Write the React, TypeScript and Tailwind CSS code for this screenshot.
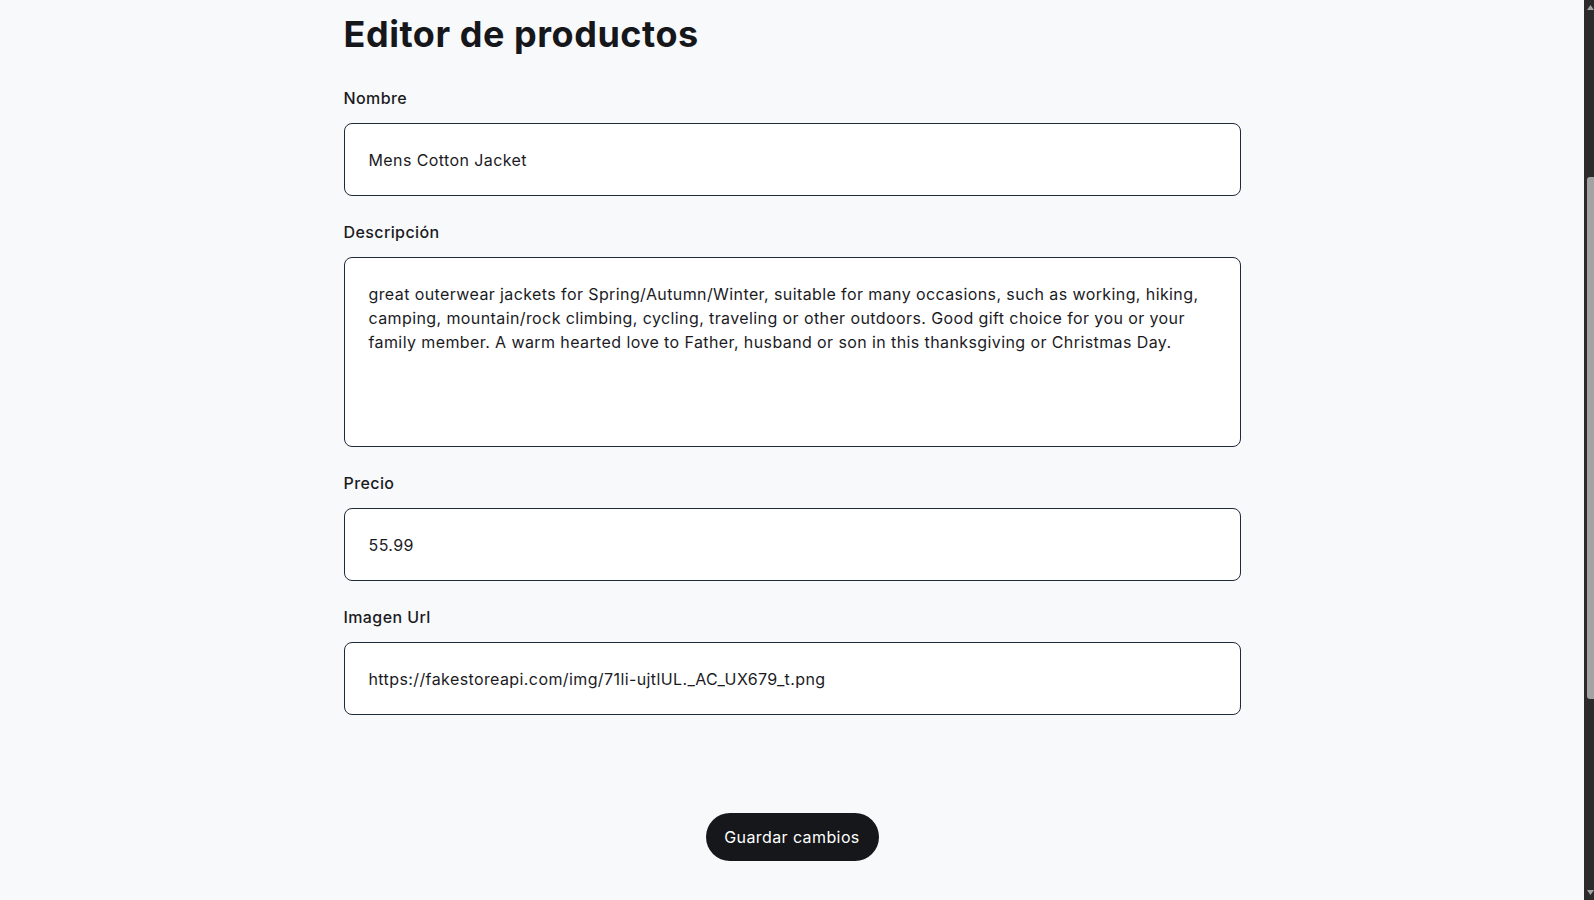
import { useEffect, useRef, useState } from 'react';

const font = { fontFamily: 'Inter, "Noto Sans", sans-serif' };

function ScrollArrow({ down }: { down?: boolean }) {
  return (
    <div className="h-[15px] flex items-center pl-[3px]">
      <svg width="7" height="5" viewBox="0 0 7 5" className={down ? 'rotate-180' : ''}>
        <path d="M3.5 0 L7 5 L0 5 Z" fill="#a3a3a3" />
      </svg>
    </div>
  );
}

export default function App() {
  const scrollRef = useRef<HTMLDivElement>(null);
  const [producto, setProducto] = useState({
    nombre: 'Mens Cotton Jacket',
    descripcion:
      'great outerwear jackets for Spring/Autumn/Winter, suitable for many occasions, such as working, hiking, camping, mountain/rock climbing, cycling, traveling or other outdoors. Good gift choice for you or your family member. A warm hearted love to Father, husband or son in this thanksgiving or Christmas Day.',
    precio: '55.99',
    imagen: 'https://fakestoreapi.com/img/71li-ujtlUL._AC_UX679_t.png',
  });

  // la página está desplazada hacia abajo en la captura
  useEffect(() => {
    if (scrollRef.current) scrollRef.current.scrollTop = 281;
  }, []);

  const update = (key: keyof typeof producto) => (e: React.ChangeEvent<HTMLInputElement | HTMLTextAreaElement>) =>
    setProducto({ ...producto, [key]: e.target.value });

  const inputCls =
    'block w-full h-[73px] rounded-lg border border-gray-800 bg-white px-6 text-base tracking-[0.025em] text-[#1b1b1f] outline-none';
  const labelCls = 'block mb-[13px] text-base font-medium leading-6 tracking-[0.025em]';

  return (
    <div className="h-screen flex bg-[#f8f9fb] text-[#1b1b1f]" style={font}>
      <div ref={scrollRef} className="flex-1 overflow-y-scroll [scrollbar-width:none]">
        <div className="w-[897px] mx-auto pt-[295px] pb-[361px]">
          <h1 className="text-4xl font-bold tracking-[0.015em] text-[#16171b]">Editor de productos</h1>

          <form className="mt-8 flex flex-col gap-6" onSubmit={(e) => e.preventDefault()}>
            <div>
              <label className={labelCls}>Nombre</label>
              <input className={inputCls} value={producto.nombre} onChange={update('nombre')} />
            </div>

            <div>
              <label className={labelCls}>Descripción</label>
              <textarea
                className="block w-full h-[190px] resize-none rounded-lg border border-gray-800 bg-white p-6 text-base leading-6 tracking-[0.025em] text-[#1b1b1f] outline-none"
                value={producto.descripcion}
                onChange={update('descripcion')}
              />
            </div>

            <div>
              <label className={labelCls}>Precio</label>
              <input className={inputCls} value={producto.precio} onChange={update('precio')} />
            </div>

            <div>
              <label className={labelCls}>Imagen Url</label>
              <input className={inputCls} value={producto.imagen} onChange={update('imagen')} />
            </div>

            <div className="flex justify-center mt-[74px]">
              <button
                type="submit"
                className="h-12 w-[173px] rounded-full bg-[#15171a] text-base tracking-[0.025em] text-white"
              >
                Guardar cambios
              </button>
            </div>
          </form>
        </div>
      </div>

      {/* barra de desplazamiento oscura */}
      <div className="w-[10px] shrink-0 bg-[#2b2b2b] flex flex-col">
        <ScrollArrow />
        <div className="h-[162px]" />
        <div className="h-[522px] ml-[3px] rounded-l-[3px] bg-[#a3a3a3]" />
        <div className="flex-1" />
        <ScrollArrow down />
      </div>
    </div>
  );
}
